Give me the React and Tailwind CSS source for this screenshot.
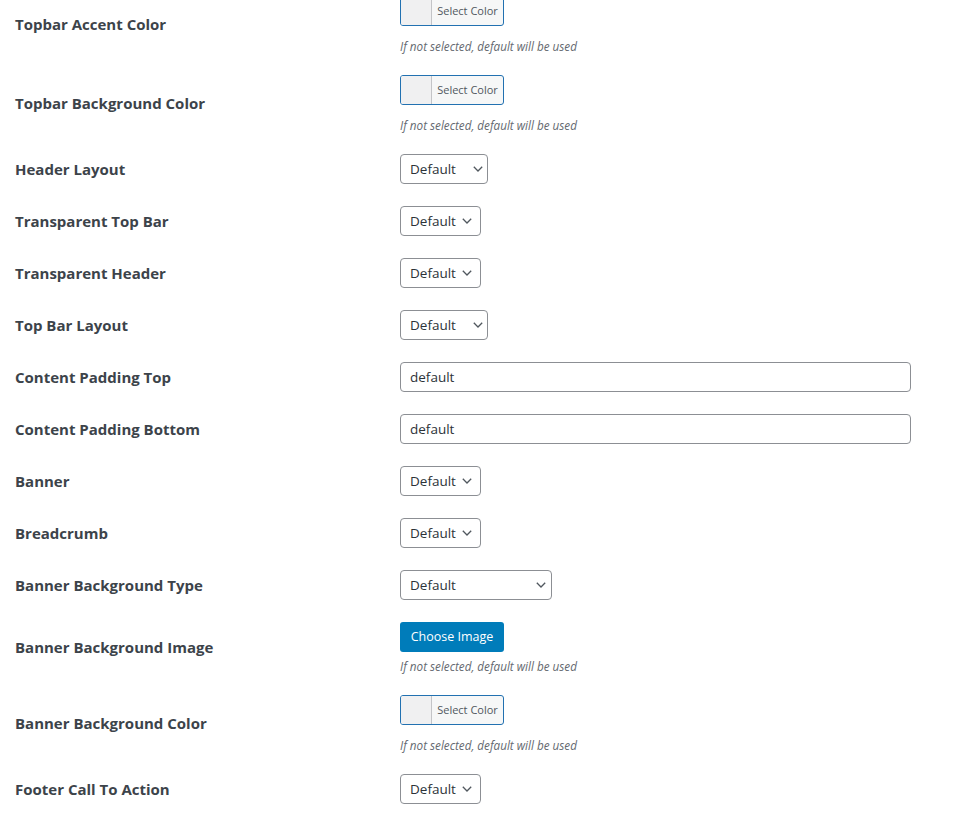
import React from 'react';

const font = { fontFamily: '"Open Sans", "Noto Sans", sans-serif' };

const Chevron = () => (
  <svg width="10" height="6" viewBox="0 0 10 6" className="shrink-0">
    <path d="M0.8 0.8L5 5l4.2-4.2" fill="none" stroke="#50575e" strokeWidth="1.3" />
  </svg>
);

// a select box drawn like the WordPress one
const Select = ({ width, pad = 'pr-[8px]' }) => (
  <div className={`flex h-[30px] items-center justify-between rounded-[4px] border border-[#8c8f94] bg-white pl-[9px] text-[13.5px] text-[#2c3338] ${width} ${pad}`}>
    <span>Default</span>
    <Chevron />
  </div>
);

const Desc = ({ className }) => (
  <p className={`text-[11.7px] italic leading-[14px] text-[#646970] ${className}`}>If not selected, default will be used</p>
);

const ColorPicker = () => (
  <div>
    <div className="flex h-[30px] w-[104px] overflow-hidden rounded-[3px] border border-[#2271b1] bg-[#f6f7f7]">
      <div className="w-[31px] border-r border-[#c3c4c7] bg-[#f0f0f1]" />
      <div className="flex flex-1 items-center justify-center text-[11px] text-[#50575e]">Select Color</div>
    </div>
    <Desc className="mt-[13px]" />
  </div>
);

const TextInput = () => (
  <div className="flex h-[30px] w-[511px] items-center rounded-[4px] border border-[#8c8f94] px-[9px] text-[13.5px] text-[#2c3338]">default</div>
);

const rows = [
  { label: 'Topbar Accent Color', field: <ColorPicker /> },
  { label: 'Topbar Background Color', field: <ColorPicker /> },
  { label: 'Header Layout', field: <Select width="w-[88px]" pad="pr-[4px]" /> },
  { label: 'Transparent Top Bar', field: <Select width="w-[81px]" /> },
  { label: 'Transparent Header', field: <Select width="w-[81px]" /> },
  { label: 'Top Bar Layout', field: <Select width="w-[88px]" pad="pr-[4px]" /> },
  { label: 'Content Padding Top', field: <TextInput /> },
  { label: 'Content Padding Bottom', field: <TextInput /> },
  { label: 'Banner', field: <Select width="w-[81px]" /> },
  { label: 'Breadcrumb', field: <Select width="w-[81px]" /> },
  { label: 'Banner Background Type', field: <Select width="w-[152px]" pad="pr-[5px]" /> },
  {
    label: 'Banner Background Image',
    field: (
      <div>
        <button className="flex h-[30px] w-[104px] items-center justify-center rounded-[3px] bg-[#007cba] text-[12.5px] text-white">Choose Image</button>
        <Desc className="mt-[7px]" />
      </div>
    ),
  },
  { label: 'Banner Background Color', field: <ColorPicker /> },
  { label: 'Footer Call To Action', field: <Select width="w-[81px]" /> },
];

export default function App() {
  return (
    <div className="min-h-screen overflow-hidden bg-white" style={font}>
      <div className="mt-[-15px]">
        {rows.map((row) => (
          <div key={row.label} className="flex items-center">
            <div className="w-[400px] pl-[15px] text-[15px] font-bold text-[#3c434a]">{row.label}</div>
            <div className="py-[11px]">{row.field}</div>
          </div>
        ))}
      </div>
    </div>
  );
}
